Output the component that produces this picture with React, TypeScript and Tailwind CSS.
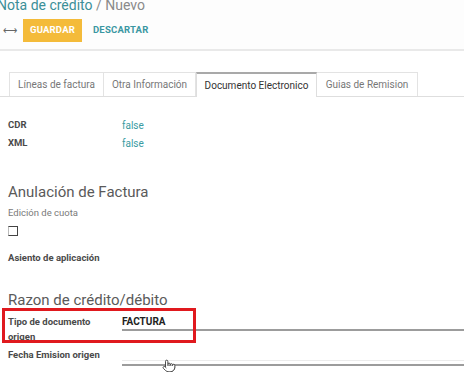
import { Pointer } from 'lucide-react';

const tabs = [
  { label: 'Líneas de factura', w: 'w-[95px]' },
  { label: 'Otra Información', w: 'w-[92px]' },
  { label: 'Documento Electronico', w: 'w-[121px]', active: true },
  { label: 'Guias de Remision', w: 'w-[101px]' },
];

export default function App() {
  return (
    <div className="relative w-[464px] h-[372px] overflow-hidden bg-white font-['Roboto',sans-serif] text-[#4c4c4c]">
      {/* Control panel */}
      <div className="flow-root h-[51px] border-b-2 border-[#e9e9e9] bg-[#fdfdfd]">
        <div className="-mt-[4px] -ml-[3px] h-[18px] text-[14px] leading-[18px] whitespace-nowrap">
          <span className="text-[#3b8f98]">Nota de crédito</span>
          <span className="text-[#8a8a8a]"> / Nuevo</span>
        </div>
        <div className="mt-[5px] flex items-center h-[23px]">
          <span className="ml-[3px] w-[10px] text-[10px] text-[#666] leading-none">⟷</span>
          <button className="ml-[10px] w-[59px] h-[23px] bg-[#f4bb3a] text-white text-[9.5px] font-bold tracking-[0.2px]">
            GUARDAR
          </button>
          <button className="ml-[11px] text-[#3a97a2] text-[9.5px] font-bold tracking-[0.2px]">
            DESCARTAR
          </button>
        </div>
      </div>

      {/* Tabs */}
      <div className="mt-[21px] h-[25px] border-b border-[#dedede] pl-[9px] flex">
        {tabs.map((t) => (
          <div
            key={t.label}
            className={
              t.active
                ? `${t.w} h-[25px] flex items-center justify-center bg-white border-t-2 border-t-[#a9a9a9] border-x border-x-[#dedede] text-[10px] text-[#333] whitespace-nowrap`
                : `${t.w} h-[24px] flex items-center justify-center border-t border-r border-[#e3e3e3] first:border-l text-[10px] text-[#777] whitespace-nowrap`
            }
          >
            {t.label}
          </div>
        ))}
      </div>

      {/* Sheet */}
      <div className="pl-[8px] pt-[19px]">
        <div className="flex h-[18px] items-center">
          <span className="w-[114px] text-[9.5px] font-bold text-[#4a4a4a]">CDR</span>
          <span className="text-[10px] text-[#3a9ba2]">false</span>
        </div>
        <div className="flex h-[18px] items-center">
          <span className="w-[114px] text-[9.5px] font-bold text-[#4a4a4a]">XML</span>
          <span className="text-[10px] text-[#3a9ba2]">false</span>
        </div>

        <div className="mt-[29px] h-[22px] flex items-center text-[15px] text-[#5a5a5a]">Anulación de Factura</div>
        <div className="mt-[3px] h-[14px] flex items-center text-[9.5px] text-[#7a7a7a]">Edición de cuota</div>
        <div className="mt-[6px] w-[10px] h-[10px] border border-[#444] border-l-[#bbb]" />
        <div className="mt-[15px] h-[14px] flex items-center text-[9.5px] font-bold text-[#4a4a4a]">Asiento de aplicación</div>

        <div className="mt-[24px] h-[22px] flex items-center text-[15px] text-[#5a5a5a]">Razon de crédito/débito</div>

        <div className="mt-[3px] flex">
          <div className="w-[114px] text-[9.5px] leading-[15px] font-bold text-[#4a4a4a]">
            Tipo de documento
            <br />
            origen
          </div>
          <div className="flex-1">
            <div className="h-[15px] flex items-center text-[10px] font-bold text-[#222]">FACTURA</div>
            <div className="h-[2px] bg-[#9c9c9c]" />
          </div>
        </div>

        <div className="flex mt-[4px]">
          <div className="w-[114px] h-[14px] flex items-center text-[9.5px] font-bold text-[#4a4a4a]">Fecha Emision origen</div>
          <div className="flex-1 pt-[12px]">
            <div className="h-px bg-[#ececec]" />
            <div className="mt-[3px] h-[2px] bg-[#9c9c9c]" />
          </div>
        </div>
      </div>

      {/* annotation + cursor */}
      <div className="absolute left-[2px] top-[308px] w-[194px] h-[35px] border-[3px] border-[#e0191e]" />
      <Pointer className="absolute left-[162px] top-[359px] text-[#333] fill-white" size={14} strokeWidth={1.5} />
    </div>
  );
}
